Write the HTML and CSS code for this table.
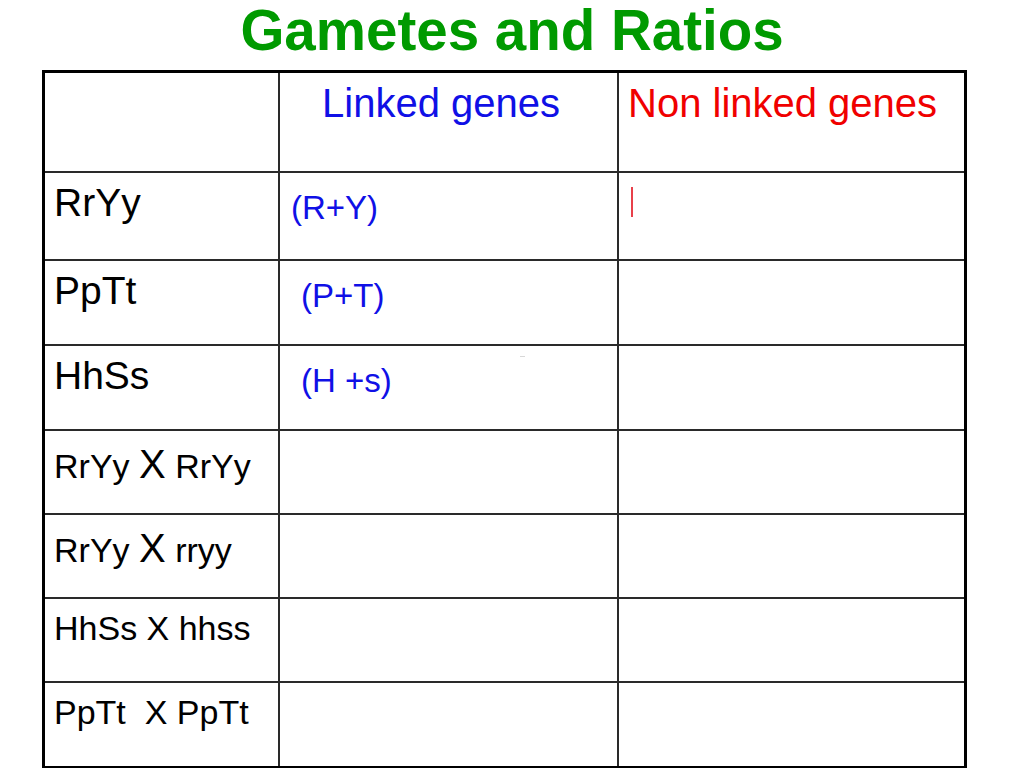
FILE: index.html
```html
<!DOCTYPE html>
<html>
<head>
<meta charset="utf-8">
<title>Gametes and Ratios</title>
<link rel="stylesheet" href="styles.css">
</head>
<body>
<h1 class="title">Gametes and Ratios</h1>
<div class="grid">
  <div class="cell"></div>
  <div class="cell head linked">Linked genes</div>
  <div class="cell head nonlinked">Non linked genes</div>

  <div class="cell label">RrYy</div>
  <div class="cell gamete">(R+Y)</div>
  <div class="cell"><span class="cursor"></span></div>

  <div class="cell label">PpTt</div>
  <div class="cell gamete indent">(P+T)</div>
  <div class="cell"></div>

  <div class="cell label">HhSs</div>
  <div class="cell gamete indent">(H +s)<span class="speck"></span></div>
  <div class="cell"></div>

  <div class="cell label small">RrYy <span class="x">X</span> RrYy</div>
  <div class="cell"></div>
  <div class="cell"></div>

  <div class="cell label small">RrYy <span class="x">X</span> rryy</div>
  <div class="cell"></div>
  <div class="cell"></div>

  <div class="cell label small plain">HhSs X hhss</div>
  <div class="cell"></div>
  <div class="cell"></div>

  <div class="cell label small plain">PpTt&nbsp; X PpTt</div>
  <div class="cell"></div>
  <div class="cell"></div>
</div>
</body>
</html>
```

FILE: styles.css
```css
html, body {
  margin: 0;
  padding: 0;
  background: #ffffff;
}

body {
  font-family: "Liberation Sans", Arial, sans-serif;
  color: #000;
  overflow: hidden;
}

.title {
  margin: 0 0 8px 0;
  font-size: 56.5px;
  line-height: 62px;
  font-weight: bold;
  color: #009a00;
  text-align: center;
}

.grid {
  margin-left: 42px;
  width: 919px;
  border: 3px solid #000;
  background: #2a2a2a;
  display: grid;
  grid-template-columns: 233px 337px 345px;
  grid-template-rows: 98px 86px 83px 83px 82px 82px 82px 83px;
  gap: 2px;
}

.cell {
  background: #fff;
  line-height: 1;
  position: relative;
}

.head {
  font-size: 40px;
  padding-top: 10px;
}

.linked {
  color: #1010e6;
  padding-left: 42px;
}

.nonlinked {
  color: #f00000;
  padding-left: 9px;
}

.label {
  font-size: 39px;
  padding-top: 10px;
  padding-left: 9px;
}

.label.small {
  font-size: 34px;
  padding-top: 13px;
}

.label.small.plain {
  padding-top: 12px;
}

.x {
  font-size: 40px;
}

.gamete {
  font-size: 33px;
  color: #1010e6;
  padding-top: 18px;
  padding-left: 11px;
}

.gamete.indent {
  padding-left: 21px;
}

.cursor {
  display: inline-block;
  width: 2px;
  height: 30px;
  background: #e8404a;
  margin-left: 12px;
  margin-top: 14px;
}

.speck {
  position: absolute;
  left: 240px;
  top: 10px;
  width: 5px;
  height: 1px;
  background: #d8d8d8;
}
```
